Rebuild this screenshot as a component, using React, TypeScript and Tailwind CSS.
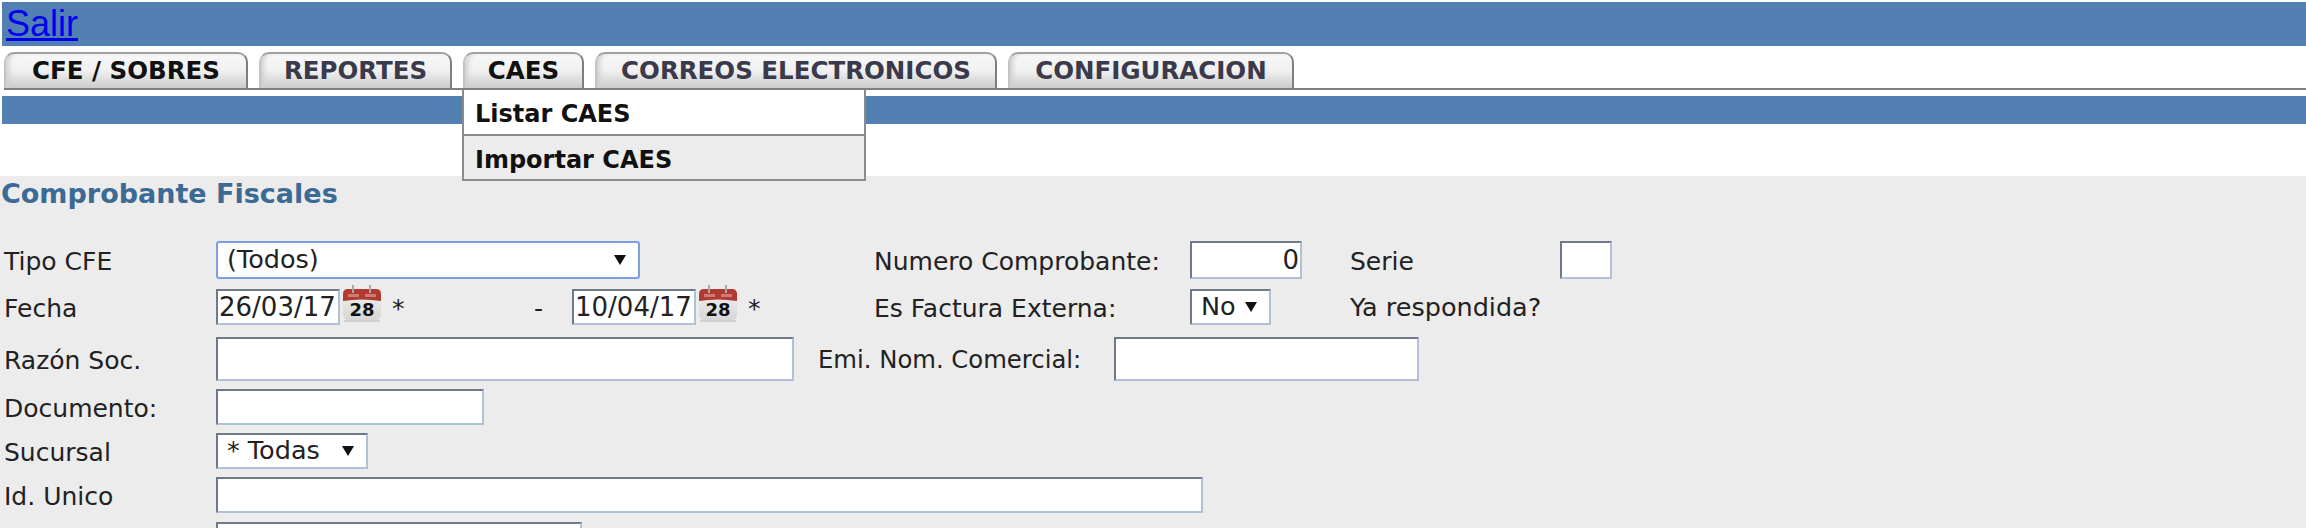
const font = "font-['DejaVu_Sans',sans-serif]";

function CalendarIcon() {
  return (
    <svg width="40" height="38" viewBox="0 0 40 38" className="shrink-0 self-start -mt-[4px] ml-[2px]">
      <defs>
        <linearGradient id="calBody" x1="0" y1="0" x2="0" y2="1">
          <stop offset="0" stopColor="#f2f2f2" />
          <stop offset="1" stopColor="#d6d6d6" />
        </linearGradient>
      </defs>
      <rect x="1" y="4" width="38" height="31" rx="5" fill="url(#calBody)" />
      <path d="M1 16 V9 Q1 4 6 4 H34 Q39 4 39 9 V16 Q20 13 1 16 Z" fill="#b03a32" />
      <path d="M6 9 H17 V12 H6 Z M23 9 H34 V12 H23 Z" fill="#cf7a72" />
      <path d="M11 0 V8 M28 0 V8" stroke="#a8a8a8" strokeWidth="2" />
      <path d="M2 36 H38" stroke="#d0d0d0" strokeWidth="2" />
      <text x="20" y="31" textAnchor="middle" fontSize="18" fontWeight="700" fill="#111" fontFamily="DejaVu Sans">
        28
      </text>
    </svg>
  );
}

function Tab({ label, width, active }: { label: string; width: string; active?: boolean }) {
  return (
    <div
      className={`${width} h-[36px] flex items-center justify-center rounded-t-[10px] border-t-2 border-x-2 border-t-[#a0a0a0] border-l-[#c4c4c4] border-r-[#7e7e7e] font-bold text-[24.5px] leading-none bg-gradient-to-b from-[#f8f8f8] via-[#f0f0f0] to-[#cbcbcb] shadow-[inset_5px_0_5px_-2px_#d0d0d0] ${
        active ? "text-[#111]" : "text-[#3a3a4a]"
      }`}
    >
      {label}
    </div>
  );
}

function Label({ text, width }: { text: string; width: string }) {
  return <div className={`${width} shrink-0 pl-[4px] pt-[2px] text-[25px] leading-none text-[#222]`}>{text}</div>;
}

function Field({ width, value, right }: { width: string; value?: string; right?: boolean }) {
  return (
    <div
      className={`${width} h-full shrink-0 bg-white border-2 border-t-[#6e7a8c] border-l-[#6e7a8c] border-r-[#b0c0d8] border-b-[#b0c0d8] flex items-center text-[26px] leading-none text-[#222] ${
        right ? "justify-end pr-[1px]" : "pl-[1px]"
      }`}
    >
      {value}
    </div>
  );
}

function Select({ width, value, focus }: { width: string; value: string; focus?: boolean }) {
  return (
    <div
      className={`${width} h-full shrink-0 bg-white flex items-center justify-between pl-[9px] pr-[12px] text-[25.5px] leading-none text-[#222] border-2 ${
        focus
          ? "border-[#7b9fe0] rounded-[3px]"
          : "border-t-[#6e7a8c] border-l-[#6e7a8c] border-r-[#b0c0d8] border-b-[#b0c0d8]"
      }`}
    >
      <span>{value}</span>
      <svg width="12" height="12" viewBox="0 0 12 12" className="shrink-0">
        <path d="M0 1 H12 L6 11 Z" fill="#111" />
      </svg>
    </div>
  );
}

export default function App() {
  return (
    <div className={`${font} h-[528px] w-[2306px] overflow-hidden bg-white relative`}>
      <div className="mt-[2px] ml-[2px] h-[44px] bg-[#5280b3] font-['Liberation_Sans',sans-serif] text-[36px] leading-[44px] pl-[4px]">
        <a href="#" className="text-[#0000ee] underline">
          Salir
        </a>
      </div>

      <div className="mt-[6px] ml-[4px] flex gap-[11px] border-b-2 border-[#808080]">
        <Tab label="CFE / SOBRES" width="w-[244px]" active />
        <Tab label="REPORTES" width="w-[193px]" />
        <Tab label="CAES" width="w-[121px]" active />
        <Tab label="CORREOS ELECTRONICOS" width="w-[402px]" />
        <Tab label="CONFIGURACION" width="w-[286px]" />
      </div>

      <div className="mt-[6px] ml-[2px] h-[28px] bg-[#5280b3]" />

      {/* menu del tab CAES */}
      <div className="absolute left-[462px] top-[90px] w-[404px] border-2 border-t-0 border-[#8c8c8c] font-bold text-[24px] text-[#111] leading-none">
        <div className="h-[44px] bg-white flex items-center pl-[11px] pt-[4px]">Listar CAES</div>
        <div className="h-[45px] bg-[#ececec] border-t-2 border-[#8c8c8c] flex items-center pl-[11px] pt-[4px]">
          Importar CAES
        </div>
      </div>

      <div className="mt-[52px] h-[352px] bg-[#ececec]">
        <div className="pl-[1px] pt-[4px] pb-[2px] font-bold text-[27px] leading-[28px] text-[#3b6a94]">
          Comprobante Fiscales
        </div>

        <div className="mt-[31px] h-[38px] flex items-center">
          <Label text="Tipo CFE" width="w-[216px]" />
          <Select width="w-[424px]" value="(Todos)" focus />
          <Label text="Numero Comprobante:" width="w-[550px] pl-[234px]!" />
          <Field width="w-[112px]" value="0" right />
          <Label text="Serie" width="w-[258px] pl-[48px]!" />
          <Field width="w-[52px]" />
        </div>

        <div className="mt-[10px] h-[36px] flex items-center">
          <Label text="Fecha" width="w-[216px]" />
          <Field width="w-[124px]" value="26/03/17" />
          <CalendarIcon />
          <div className="w-[190px] shrink-0 flex justify-between pl-[10px] pr-[29px] pt-[2px] text-[25px] leading-none text-[#222]">
            <span>*</span>
            <span>-</span>
          </div>
          <Field width="w-[124px]" value="10/04/17" />
          <CalendarIcon />
          <Label text="*" width="w-[132px] pl-[10px]!" />
          <Label text="Es Factura Externa:" width="w-[320px]" />
          <Select width="w-[81px]" value="No" />
          <Label text="Ya respondida?" width="w-[300px] pl-[79px]! text-[25.5px]!" />
        </div>

        <div className="mt-[12px] h-[44px] flex items-center">
          <Label text="Razón Soc." width="w-[216px]" />
          <Field width="w-[578px]" />
          <Label text="Emi. Nom. Comercial:" width="w-[320px] pl-[24px]! text-[24.3px]!" />
          <Field width="w-[305px]" />
        </div>

        <div className="mt-[8px] h-[36px] flex items-center">
          <Label text="Documento:" width="w-[216px]" />
          <Field width="w-[268px]" />
        </div>

        <div className="mt-[8px] h-[36px] flex items-center">
          <Label text="Sucursal" width="w-[216px]" />
          <Select width="w-[152px]" value="* Todas" />
        </div>

        <div className="mt-[8px] h-[36px] flex items-center">
          <Label text="Id. Unico" width="w-[216px]" />
          <Field width="w-[987px]" />
        </div>

        <div className="mt-[9px] h-[36px] flex items-center">
          <Label text="" width="w-[216px]" />
          <Field width="w-[366px]" />
        </div>
      </div>
    </div>
  );
}
